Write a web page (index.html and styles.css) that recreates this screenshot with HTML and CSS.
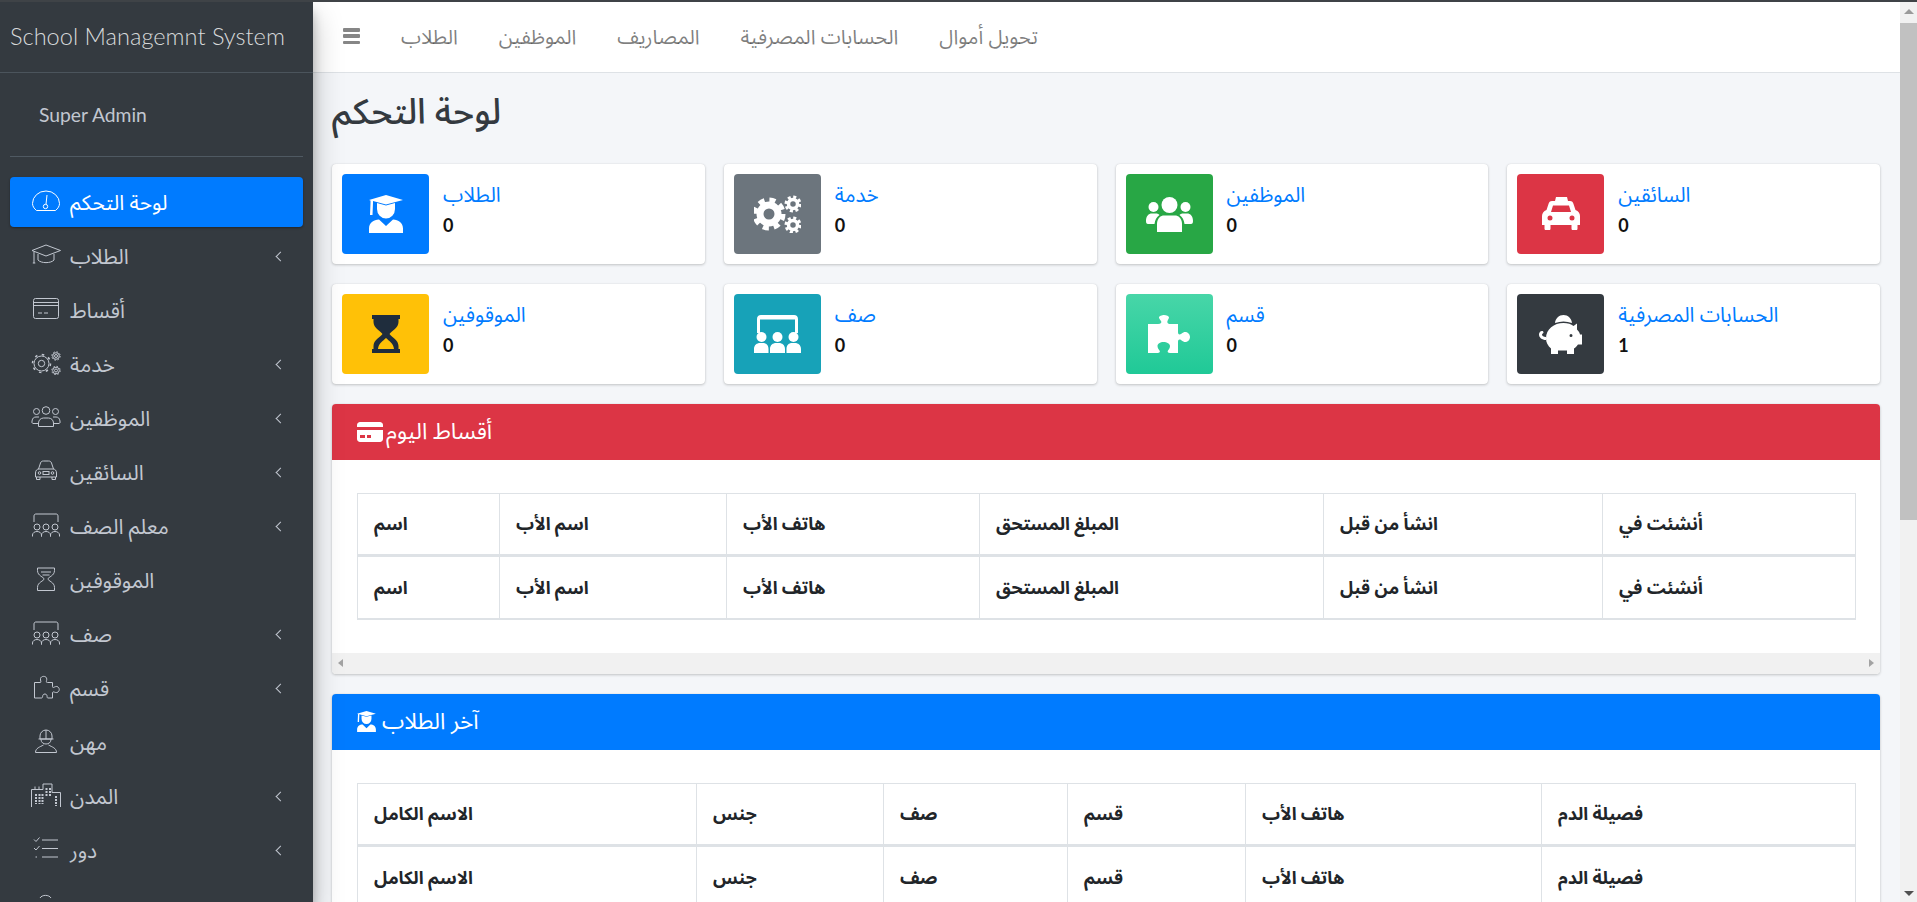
FILE: index.html
```html
<!DOCTYPE html>
<html lang="ar">
<head>
<meta charset="utf-8">
<title>School Managemnt System</title>
<link rel="stylesheet" href="styles.css">
</head>
<body>
<svg class="defs" width="0" height="0" aria-hidden="true">
  <symbol id="l-gauge" viewBox="0 0 30 24"><path d="M5.5 21.5C3 19.500 1.500 17 1.500 14.500A13.500 12.500 0 0 1 28.500 14.500C28.500 17 27 19.500 24.500 21.500Z"/><circle cx="14.500" cy="17.500" r="2.200"/><path d="M15 15.300L16 6"/></symbol>
  <symbol id="l-cap" viewBox="0 0 30 24"><path d="M15 2L29.500 7.500L15 13L1 7.500Z"/><path d="M7 11V17C10 20.500 20 20.500 23 17V11"/><path d="M3 8.500V20M1.800 20H4.300"/></symbol>
  <symbol id="l-card" viewBox="0 0 30 24"><rect x="2.500" y="1.500" width="25" height="20" rx="2"/><path d="M2.500 5.500H27.500M2.500 8.500H27.500M7 16H11M13 16H17"/></symbol>
  <symbol id="l-gears" viewBox="0 0 30 24"><circle cx="10.500" cy="12.500" r="3.200"/><circle cx="10.500" cy="12.500" r="7.500"/><circle class="teeth" cx="10.500" cy="12.500" r="9"/><circle cx="25" cy="5" r="1.500"/><circle cx="25" cy="5" r="3.300"/><circle class="teeth-s" cx="25" cy="5" r="4.200"/><circle cx="25" cy="19.500" r="1.500"/><circle cx="25" cy="19.500" r="3.300"/><circle class="teeth-s" cx="25" cy="19.500" r="4.200"/></symbol>
  <symbol id="l-users" viewBox="0 0 30 24"><circle cx="15" cy="5.500" r="3.800"/><circle cx="5.500" cy="6.500" r="3"/><circle cx="24.500" cy="6.500" r="3"/><path d="M7.500 21.500V18C7.500 15 10 13 12.500 13H17.500C20 13 22.500 15 22.500 18V21.500Z"/><path d="M1 16C1.500 13 3 12 5 12H8M29 16C28.500 13 27 12 25 12H22M1 16V18M29 16V18M1.500 18.500H7M28.500 18.500H23"/></symbol>
  <symbol id="l-car" viewBox="0 0 30 24"><path d="M7.500 10L9.500 4C10 2.500 11 2 12.500 2H17.500C19 2 20 2.500 20.500 4L22.500 10"/><path d="M4.500 18V14C4.500 11.500 6 10 8 10H22C24 10 25.500 11.500 25.500 14V18Z"/><path d="M5.500 18V20.500H9V18M21 18V20.500H24.500V18"/><circle cx="8.500" cy="14" r="1.300"/><circle cx="21.500" cy="14" r="1.300"/><rect x="12" y="12.500" width="6" height="3"/></symbol>
  <symbol id="l-class" viewBox="0 0 30 24"><path d="M3 9V3C3 1.500 4 1 5 1H25C26 1 27 1.500 27 3V9"/><circle cx="6" cy="14" r="3"/><circle cx="15" cy="14" r="3"/><circle cx="24" cy="14" r="3"/><path d="M1.500 23.500V22C1.500 20 3.500 18.500 6 18.500C8.500 18.500 10.500 20 10.500 22V23.500M10.500 23.500V22C10.500 20 12.500 18.500 15 18.500C17.500 18.500 19.500 20 19.500 22V23.500M19.500 23.500V22C19.500 20 21.500 18.500 24 18.500C26.500 18.500 28.500 20 28.500 22V23.500"/></symbol>
  <symbol id="l-hour" viewBox="0 0 30 24"><path d="M6.500 1H23.500V3.500C23.500 9 17 10 17 12C17 14 23.500 15 23.500 20.500V23.500H6.500V20.500C6.500 15 13 14 13 12C13 10 6.500 9 6.500 3.500Z"/><path d="M10 5H20M11.500 8H18.500"/></symbol>
  <symbol id="l-puzzle" viewBox="0 0 30 24"><path d="M3.500 7.500H9C11 7.500 9 5.500 9.500 3.500C10 1 14.500 .5 15.500 3C16.500 5.500 14 7.500 16.500 7.500H21.500V11.500C21.500 14 24 11 26 11.500C29 12.500 29 16.500 26 17.500C24 18 21.500 15.500 21.500 18V23H17C15 23 17.500 19.500 14 19C10.500 19 12.500 23 10.500 23H3.500Z"/></symbol>
  <symbol id="l-helmet" viewBox="0 0 30 24"><path d="M9 10V7A6 6 0 0 1 21 7V10ZM7.500 10H22.500M15 1V10"/><path d="M10 10.500C10 16.500 20 16.500 20 10.500"/><path d="M4.500 23.500C4.500 19 9 18 12.500 16M25.500 23.500C25.500 19 21 18 17.500 16M4.500 23.500H25.500"/></symbol>
  <symbol id="l-city" viewBox="0 0 30 24"><path d="M.5 24V6.500H4V3.500M4 6.500H8V3.500M8 6.500H12V1H21V9.500H29.500V24"/><path class="dots" d="M5 11V21M8.500 11V21M11.500 11V21M15.500 5V14M19 5V14M25 13V23"/></symbol>
  <symbol id="l-tasks" viewBox="0 0 30 24"><path d="M11 3H27M11 11.500H27M11 20H27"/><path d="M3 2.500L5 4.500L8.500 .5M3 11L5 13L8.500 9M4.500 20H6"/></symbol>
  <symbol id="l-arc" viewBox="0 0 30 24"><path d="M9 7C11 3.500 18 3.500 20 7"/></symbol>

  <symbol id="s-student" viewBox="0 0 34 38"><path d="M17 0L34 5L17 9.500L4 6V8L3.500 20H1L1.500 8V5.500L0 5Z"/><path d="M8 8L17 10.500L26 8V14A9 9.500 0 0 1 8 14Z"/><path d="M0 38V33.500C0 28 4.500 24.500 10 24.500L17 31L24 24.500C29.500 24.500 34 28 34 33.500V38Z"/></symbol>
  <symbol id="s-card" viewBox="0 0 26 20"><path d="M3 0H23C24.600 0 26 1.400 26 3V5H0V3C0 1.400 1.400 0 3 0Z"/><path fill-rule="evenodd" d="M0 8H26V17C26 18.600 24.600 20 23 20H3C1.400 20 0 18.600 0 17ZM3 13V16H8V13ZM10 13V16H14V13Z"/></symbol>
  <symbol id="s-cogs" viewBox="0 0 47 38"><g class="cog-ring"><circle cx="15" cy="19" r="9"/></g><g class="cog-teeth"><circle cx="15" cy="19" r="14"/></g><g class="cog-ring-s"><circle cx="39" cy="9" r="4.500"/><circle cx="39" cy="30" r="4.500"/></g><g class="cog-teeth-s"><circle cx="39" cy="9" r="7"/><circle cx="39" cy="30" r="7"/></g></symbol>
  <symbol id="s-users" viewBox="0 0 47 35"><circle cx="23.500" cy="8" r="8"/><circle cx="7.500" cy="10" r="5"/><circle cx="39.500" cy="10" r="5"/><path d="M11 35V27C11 21 15 18.500 18 18.500H29C32 18.500 36 21 36 27V35Z"/><path d="M0 24C0 19 2.500 16.500 6 16.500H10C11.500 16.500 12.500 17 13.500 18C10.500 20 9 23 8.500 27H2C.5 27 0 26 0 24ZM47 24C47 19 44.500 16.500 41 16.500H37C35.500 16.500 34.500 17 33.500 18C36.500 20 38 23 38.500 27H45C46.500 27 47 26 47 24Z"/></symbol>
  <symbol id="s-taxi" viewBox="0 0 38 33"><path fill-rule="evenodd" d="M14 0H25L26 4H28C30 4 31 5 31.500 7L33.500 13C36.500 14 38 16.500 38 19V28H35.500V31.500C35.500 32.500 35 33 34 33H31C30 33 29.500 32.500 29.500 31.500V28H8.500V31.500C8.500 32.500 8 33 7 33H4C3 33 2.500 32.500 2.500 31.500V28H0V19C0 16.500 1.500 14 4.500 13L6.500 7C7 5 8 4 10 4H13ZM11 8.500L9 15H29L27 8.500ZM8 18.500A2.500 2.500 0 1 0 8 23.500A2.500 2.500 0 1 0 8 18.500ZM30 18.500A2.500 2.500 0 1 0 30 23.500A2.500 2.500 0 1 0 30 18.500Z"/></symbol>
  <symbol id="s-hour" viewBox="0 0 28 38"><path fill-rule="evenodd" d="M0 0H28V4H26.500V7C26.500 13 20 15.500 17.500 19C20 22.500 26.500 25 26.500 31V34H28V38H0V34H1.500V31C1.500 25 8 22.500 10.500 19C8 15.500 1.500 13 1.500 7V4H0ZM14 23C11 26 6.500 28 6 34H22C21.500 28 17 26 14 23Z"/></symbol>
  <symbol id="s-class" viewBox="0 0 47 38"><path d="M3 18V4C3 1.500 4.500 0 7 0H40C42.500 0 44 1.500 44 4V18H41V4.500H6V18Z"/><circle cx="7.500" cy="22" r="5"/><circle cx="23.500" cy="22" r="5"/><circle cx="39.500" cy="22" r="5"/><path d="M0 38V34C0 30 3 28 6 28H9C12 28 14.500 30 14.500 34V38ZM16 38V34C16 30 19 28 22 28H25C28 28 31 30 31 34V38ZM32.500 38V34C32.500 30 35 28 38 28H41C44 28 47 30 47 34V38Z"/></symbol>
  <symbol id="s-puzzle" viewBox="0 0 42 38"><path d="M0 9H10C13 9 14 7.500 13 6C11.500 4 11 3 11 2.500C11 1 14 0 16 0C18.500 0 21 1 21 2.500C21 3.500 20 4.500 19.500 6C19 7.500 19.500 9 22.500 9H30V17C30 19.500 31.500 20 33 19C35 17.500 36 17 37 17C39.500 17 42 19 42 22C42 25 39.500 27 37 27C36 27 35 26.500 33 25C31.500 24 30 24.500 30 27V38H22C20 38 19 37 20 35.500C21 34 22 33 22 31C22 29 19 27 15.500 27C12 27 9.500 29 9.500 31C9.500 33 10.500 34 11.500 35.500C12.500 37 11.500 38 9.500 38H0Z"/></symbol>
  <symbol id="s-piggy" viewBox="0 0 43 39"><path d="M16 8C16.500 3.500 20 0 24.500 0C29 0 32.500 3.500 33 8C27.500 6 21.500 6 16 8Z"/><path fill-rule="evenodd" d="M24.500 8C29 8 32 9 34.500 11L38 8.500V14.500C39.500 16 40.500 17.500 41 19.500H43V29.500H39C38 31 36.500 32.500 35 33.500V39H28V35.500H19V39H12V33.500C9 31 7 27.500 7 23.500C7 14 15 8 24.500 8ZM32 19A1.500 1.500 0 1 0 32 22A1.500 1.500 0 1 0 32 19Z"/><path d="M7 25C3 25 0 22.500 0 19.500C0 18 1 16 3 16C4 16 4.500 16.700 4.500 17.500C4.500 18.500 3 18.500 3 19.500C3 21 4.500 22 7 22Z"/></symbol>
</svg>

<aside class="sidebar">
  <div class="brand">School Managemnt System</div>
  <div class="user-panel"><span class="user-name">Super Admin</span></div>
  <nav class="menu">
    <a class="menu-item active"><svg class="mi"><use href="#l-gauge"/></svg><span>لوحة التحكم</span></a>
    <a class="menu-item"><svg class="mi"><use href="#l-cap"/></svg><span>الطلاب</span><i class="chev"></i></a>
    <a class="menu-item"><svg class="mi"><use href="#l-card"/></svg><span>أقساط</span></a>
    <a class="menu-item"><svg class="mi"><use href="#l-gears"/></svg><span>خدمة</span><i class="chev"></i></a>
    <a class="menu-item"><svg class="mi"><use href="#l-users"/></svg><span>الموظفين</span><i class="chev"></i></a>
    <a class="menu-item"><svg class="mi"><use href="#l-car"/></svg><span>السائقين</span><i class="chev"></i></a>
    <a class="menu-item"><svg class="mi"><use href="#l-class"/></svg><span>معلم الصف</span><i class="chev"></i></a>
    <a class="menu-item"><svg class="mi"><use href="#l-hour"/></svg><span>الموقوفين</span></a>
    <a class="menu-item"><svg class="mi"><use href="#l-class"/></svg><span>صف</span><i class="chev"></i></a>
    <a class="menu-item"><svg class="mi"><use href="#l-puzzle"/></svg><span>قسم</span><i class="chev"></i></a>
    <a class="menu-item"><svg class="mi"><use href="#l-helmet"/></svg><span>مهن</span></a>
    <a class="menu-item"><svg class="mi"><use href="#l-city"/></svg><span>المدن</span><i class="chev"></i></a>
    <a class="menu-item"><svg class="mi"><use href="#l-tasks"/></svg><span>دور</span><i class="chev"></i></a>
    <a class="menu-item"><svg class="mi"><use href="#l-arc"/></svg></a>
  </nav>
</aside>

<main class="main">
  <header class="topbar">
    <span class="bars"><i></i><i></i><i></i></span>
    <a>الطلاب</a><a>الموظفين</a><a>المصاريف</a><a>الحسابات المصرفية</a><a>تحويل أموال</a>
  </header>
  <h1 class="page-title">لوحة التحكم</h1>
  <section class="stats">
    <div class="stat"><div class="stat-icon blue"><svg class="ic-student"><use href="#s-student"/></svg></div><div class="stat-text"><span class="stat-label">الطلاب</span><b>0</b></div></div>
    <div class="stat"><div class="stat-icon grey"><svg class="ic-cogs"><use href="#s-cogs"/></svg></div><div class="stat-text"><span class="stat-label">خدمة</span><b>0</b></div></div>
    <div class="stat"><div class="stat-icon green"><svg class="ic-users"><use href="#s-users"/></svg></div><div class="stat-text"><span class="stat-label">الموظفين</span><b>0</b></div></div>
    <div class="stat"><div class="stat-icon red"><svg class="ic-taxi"><use href="#s-taxi"/></svg></div><div class="stat-text"><span class="stat-label">السائقين</span><b>0</b></div></div>
    <div class="stat"><div class="stat-icon yellow"><svg class="ic-hour"><use href="#s-hour"/></svg></div><div class="stat-text"><span class="stat-label">الموقوفين</span><b>0</b></div></div>
    <div class="stat"><div class="stat-icon teal"><svg class="ic-class"><use href="#s-class"/></svg></div><div class="stat-text"><span class="stat-label">صف</span><b>0</b></div></div>
    <div class="stat"><div class="stat-icon mint"><svg class="ic-puzzle"><use href="#s-puzzle"/></svg></div><div class="stat-text"><span class="stat-label">قسم</span><b>0</b></div></div>
    <div class="stat"><div class="stat-icon dark"><svg class="ic-piggy"><use href="#s-piggy"/></svg></div><div class="stat-text"><span class="stat-label">الحسابات المصرفية</span><b>1</b></div></div>
  </section>

  <section class="panel">
    <div class="panel-head red"><svg class="ph-card"><use href="#s-card"/></svg><span>أقساط اليوم</span></div>
    <div class="panel-body">
      <table class="t t-fees">
        <colgroup><col class="c1"><col class="c2"><col class="c3"><col class="c4"><col class="c5"><col class="c6"></colgroup>
        <thead><tr><th>اسم</th><th>اسم الأب</th><th>هاتف الأب</th><th>المبلغ المستحق</th><th>انشأ من قبل</th><th>أنشئت في</th></tr></thead>
        <tfoot><tr><th>اسم</th><th>اسم الأب</th><th>هاتف الأب</th><th>المبلغ المستحق</th><th>انشأ من قبل</th><th>أنشئت في</th></tr></tfoot>
      </table>
    </div>
    <div class="hscroll"><i class="arrow-l"></i><i class="arrow-r"></i></div>
  </section>

  <section class="panel">
    <div class="panel-head blue"><svg class="ph-student"><use href="#s-student"/></svg><span>آخر الطلاب</span></div>
    <div class="panel-body">
      <table class="t t-students">
        <colgroup><col class="d1"><col class="d2"><col class="d3"><col class="d4"><col class="d5"><col class="d6"></colgroup>
        <thead><tr><th>الاسم الكامل</th><th>جنس</th><th>صف</th><th>قسم</th><th>هاتف الأب</th><th>فصيلة الدم</th></tr></thead>
        <tfoot><tr><th>الاسم الكامل</th><th>جنس</th><th>صف</th><th>قسم</th><th>هاتف الأب</th><th>فصيلة الدم</th></tr></tfoot>
      </table>
    </div>
  </section>
</main>

<div class="vscroll"><i class="arrow-u"></i><div class="thumb"></div><i class="arrow-d"></i></div>
</body>
</html>
```
FILE: styles.css
```css
* { box-sizing: border-box; }
html, body { height: 100%; margin: 0; overflow: hidden; }
body {
  display: flex;
  border-top: 2px solid #3f4347;
  background: #f4f6f9;
  color: #212529;
  font-family: Lato, "Noto Sans Arabic", sans-serif;
  font-size: 18px;
}
.defs { position: absolute; }

/* sidebar */
.sidebar {
  flex: 0 0 313px;
  height: 900px;
  overflow: hidden;
  background: #343a40;
  color: #c2c7d0;
  position: relative;
  z-index: 2;
  box-shadow: 0 14px 28px rgba(0,0,0,.25), 0 10px 10px rgba(0,0,0,.22);
}
.brand {
  height: 71px;
  padding: 0 0 2px 10px;
  display: flex;
  align-items: center;
  border-bottom: 1px solid #4b545c;
  font-size: 23.6px;
  font-weight: 300;
  color: #d7d9da;
  white-space: nowrap;
}
.user-panel {
  margin: 0 10px;
  height: 84px;
  display: flex;
  align-items: center;
  padding: 0 0 0 29px;
  border-bottom: 1px solid #4f5962;
}
.user-name { font-size: 19.300px; color: #c2c7d0; }
.menu { padding-top: 20px; display: flex; flex-direction: column; gap: 4px; }
.menu-item {
  flex: 0 0 50px;
  margin: 0 10px;
  padding: 0 19px 0 21px;
  display: flex;
  align-items: center;
  gap: 9px;
  border-radius: 4px;
  font-size: 21px;
  line-height: 30px;
  white-space: nowrap;
}
.menu-item.active {
  background: #007bff;
  color: #fff;
  box-shadow: 0 1px 3px rgba(0,0,0,.12), 0 1px 2px rgba(0,0,0,.24);
}
.mi {
  flex: 0 0 30px;
  width: 30px;
  height: 24px;
  margin-top: -3px;
  fill: none;
  stroke: currentColor;
  stroke-width: 1;
  overflow: visible;
}
.teeth { stroke-width: 1.5; stroke-dasharray: 2.500 4.570; }
.teeth-s { stroke-width: 1; stroke-dasharray: 1.600 1.700; }
.dots { stroke-width: 2; stroke-dasharray: 2 1; }
.chev {
  margin-left: auto;
  width: 7px;
  height: 7px;
  border-left: 1.5px solid currentColor;
  border-bottom: 1.5px solid currentColor;
  transform: rotate(45deg);
}

/* main */
.main { flex: 1; min-width: 0; height: 900px; overflow: hidden; }
.topbar {
  height: 71px;
  background: #fff;
  border-bottom: 1px solid #dee2e6;
  display: flex;
  align-items: center;
  gap: 41px;
  padding: 0 0 0 30px;
  color: rgba(0,0,0,.5);
  font-size: 20.300px;
  white-space: nowrap;
}
.bars { width: 17px; height: 16px; margin-top: -2px; display: flex; flex-direction: column; justify-content: space-between; }
.bars i { display: block; height: 3.500px; border-radius: 1px; background: #868686; }
.page-title {
  margin: 0;
  height: 91px;
  padding: 0 0 12px 19px;
  display: flex;
  align-items: center;
  font-size: 35.500px;
  font-weight: 500;
  color: #343a40;
}

/* stat cards */
.stats {
  display: grid;
  grid-template-columns: repeat(4, 1fr);
  gap: 20px 19px;
  padding: 0 20px 0 19px;
}
.stat {
  height: 100px;
  padding: 10px;
  display: flex;
  gap: 14px;
  background: #fff;
  border-radius: 4px;
  box-shadow: 0 0 1px rgba(0,0,0,.125), 0 1px 3px rgba(0,0,0,.2);
}
.stat-icon {
  flex: 0 0 87px;
  height: 80px;
  border-radius: 4px;
  display: flex;
  align-items: center;
  justify-content: center;
  fill: #fff;
}
.stat-icon.blue { background: #007bff; }
.stat-icon.grey { background: #6c757d; }
.stat-icon.green { background: #28a745; }
.stat-icon.red { background: #dc3545; }
.stat-icon.yellow { background: #ffc107; fill: #1f2d3d; }
.stat-icon.teal { background: #17a2b8; }
.stat-icon.mint { background: linear-gradient(#48d6a8, #20c997); }
.stat-icon.dark { background: #343a40; }
.ic-student { width: 34px; height: 38px; }
.ic-cogs { width: 47px; height: 38px; }
.ic-users { width: 47px; height: 35px; }
.ic-taxi { width: 38px; height: 33px; margin-top: -1px; }
.ic-hour { width: 28px; height: 38px; }
.ic-class { width: 47px; height: 38px; }
.ic-puzzle { width: 42px; height: 38px; }
.ic-piggy { width: 43px; height: 39px; }
.cog-ring circle { fill: none; stroke: #fff; stroke-width: 7; }
.cog-teeth circle { fill: none; stroke: #fff; stroke-width: 5; stroke-dasharray: 6 5; }
.cog-ring-s circle { fill: none; stroke: #fff; stroke-width: 3.500; }
.cog-teeth-s circle { fill: none; stroke: #fff; stroke-width: 3; stroke-dasharray: 3 2.500; }

.stat-text { display: flex; flex-direction: column; padding-top: 7px; min-width: 0; }
.stat-label { color: #007bff; font-size: 20.600px; line-height: 26px; }
.stat-text b { margin-top: 5px; font-size: 18px; line-height: 26px; font-weight: 700; color: #111; }

/* panels */
.panel {
  margin: 20px 20px 0 19px;
  background: #fff;
  border-radius: 4px;
  overflow: hidden;
  box-shadow: 0 0 1px rgba(0,0,0,.125), 0 1px 3px rgba(0,0,0,.2);
}
.panel-head {
  height: 56px;
  padding: 0 25px;
  display: flex;
  align-items: center;
  gap: 3px;
  color: #fff;
  fill: #fff;
  font-size: 22.600px;
}
.panel-head.red { background: #dc3545; }
.panel-head.blue { background: #007bff; gap: 6px; }
.ph-card { width: 26px; height: 20px; }
.ph-student { width: 19px; height: 21px; }
.panel-body { padding: 33px 25px; }
.t {
  width: 100%;
  border-collapse: collapse;
  table-layout: fixed;
  font-size: 17.900px;
}
.t th {
  height: 62px;
  padding: 0 16px;
  text-align: left;
  font-weight: 700;
  color: #212529;
  border: 1px solid #dee2e6;
}
.t thead th { border-bottom: 3px solid #dee2e6; }
.t tfoot th { height: 63px; padding-top: 2px; border-bottom: 2px solid #dee2e6; }
.c1 { width: 142px; } .c2 { width: 227px; } .c3 { width: 253px; } .c4 { width: 344px; } .c5 { width: 279px; } .c6 { width: 253px; }
.d1 { width: 339px; } .d2 { width: 187px; } .d3 { width: 184px; } .d4 { width: 178px; } .d5 { width: 296px; } .d6 { width: 314px; }

.hscroll {
  height: 21px;
  background: #f1f1f1;
  display: flex;
  align-items: center;
  justify-content: space-between;
  padding: 0 6px;
}
.arrow-l { border: 4px solid transparent; border-left: 0; border-right: 5px solid #a3a3a3; }
.arrow-r { border: 4px solid transparent; border-right: 0; border-left: 5px solid #a3a3a3; }

/* page scrollbar */
.vscroll {
  flex: 0 0 17px;
  height: 900px;
  background: #f1f1f1;
  display: flex;
  flex-direction: column;
  align-items: center;
}
.arrow-u { margin-top: 7px; border: 5px solid transparent; border-top: 0; border-bottom: 5px solid #9a9a9a; }
.thumb { margin-top: 9px; width: 100%; height: 497px; background: #c1c1c1; }
.arrow-d { margin-top: auto; margin-bottom: 6px; border: 5px solid transparent; border-bottom: 0; border-top: 5px solid #505050; }
```
